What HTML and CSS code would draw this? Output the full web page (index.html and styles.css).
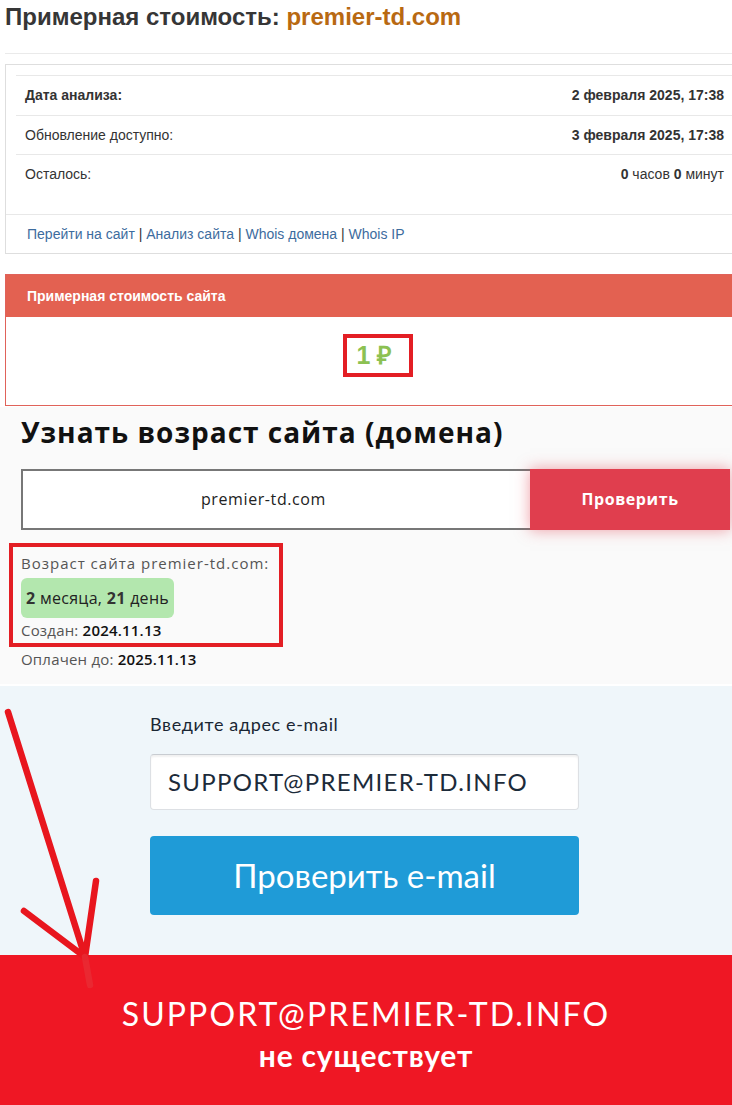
FILE: index.html
```html
<!DOCTYPE html>
<html lang="ru">
    <head>
        <meta charset="UTF-8" />
        <meta
            name="viewport"
            content="width=device-width, initial-scale=1.0" />
        <title>Примерная стоимость: premier-td.com</title>
        <link rel="stylesheet" href="styles.css">
    </head>
    <body>
        <div class="page">
            <section class="cost">
                <h1>Примерная стоимость: <span class="domain">premier-td.com</span></h1>
                <hr />

                <div class="card">
                    <div class="card-body">
                        <table class="info">
                            <tr class="strong">
                                <td>Дата анализа:</td>
                                <td>2 февраля 2025, 17:38</td>
                            </tr>
                            <tr>
                                <td>Обновление доступно:</td>
                                <td><b>3 февраля 2025, 17:38</b></td>
                            </tr>
                            <tr>
                                <td>Осталось:</td>
                                <td><b>0</b> часов <b>0</b> минут</td>
                            </tr>
                        </table>
                    </div>
                    <div class="card-footer">
                        <a href="#">Перейти на сайт</a> |
                        <a href="#">Анализ сайта</a> |
                        <a href="#">Whois домена</a> |
                        <a href="#">Whois IP</a>
                    </div>
                </div>

                <div class="price">
                    <div class="price-head">Примерная стоимость сайта</div>
                    <div class="price-body">
                        <span class="price-value">1 ₽</span>
                    </div>
                </div>
            </section>

            <section class="age">
                <h2>Узнать возраст сайта (домена)</h2>
                <div class="age-form">
                    <div class="age-input">premier-td.com</div>
                    <button class="age-btn">Проверить</button>
                </div>
                <div class="age-result">
                    <p class="age-label">Возраст сайта premier-td.com:</p>
                    <p class="age-badge"><b>2</b> месяца, <b>21</b> день</p>
                    <p class="age-date">Создан: <span>2024.11.13</span></p>
                    <span class="mark"></span>
                </div>
                <p class="age-date paid">Оплачен до: <span>2025.11.13</span></p>
            </section>

            <section class="email">
                <div class="email-form">
                    <label>Введите адрес e-mail</label>
                    <div class="email-input">SUPPORT@PREMIER-TD.INFO</div>
                    <button class="email-btn">Проверить e-mail</button>
                </div>
            </section>

            <section class="result">
                <p class="result-email">SUPPORT@PREMIER-TD.INFO</p>
                <p class="result-text">не существует</p>
            </section>

            <svg class="arrow" width="110" height="1000" viewBox="0 0 110 1000">
                <path d="M8 712 L85 957 M24 911 L85 957 M96 881 L85 957" />
                <path class="arrow-tail" d="M85 957 L90 985" />
            </svg>
        </div>
    </body>
</html>
```

FILE: styles.css
```css
* {
    box-sizing: border-box;
}

body {
    margin: 0;
    background: #fff;
}

.page {
    position: relative;
    overflow: hidden;
}

/* top block: cost and info */
.cost {
    padding-left: 5px;
    margin-right: -12px;
    font-family: "Liberation Sans", Arial, sans-serif;
    color: #333;

    & h1 {
        margin: 0;
        padding-top: 3px;
        font-size: 24px;
        line-height: 28px;
        font-weight: bold;
        color: #363636;

        & .domain {
            color: #b86912;
        }
    }

    & hr {
        margin: 22px 0 10px;
        border: 0;
        border-top: 1px solid #eaeaea;
    }
}

.card {
    border: 1px solid #dedede;
    background: #fff;

    & .card-body {
        padding: 10px 10px 20px 10px;
    }

    & .card-footer {
        border-top: 1px solid #e8e8e8;
        padding: 9px 21px;
        font-size: 14px;
        line-height: 20px;
        color: #333;

        & a {
            color: #3d6c9e;
            text-decoration: none;
        }
    }
}

table.info {
    width: 100%;
    border-collapse: collapse;
    font-size: 14px;

    & td {
        border-top: 1px solid #e8e8e8;
        padding: 10px 9px;
        line-height: 18.5px;
    }

    & td:last-child {
        text-align: right;
    }

    & tr.strong td {
        font-weight: bold;
    }
}

.price {
    margin-top: 20px;
    border: 1px solid #e0625a;
    background: #fff;

    & .price-head {
        height: 42px;
        line-height: 42px;
        padding: 0 21px;
        background: #e36151;
        color: #fff;
        font-size: 14px;
        font-weight: bold;
    }

    & .price-body {
        display: flex;
        justify-content: center;
        padding: 17px 0 28px;
    }

    & .price-value {
        border: 4px solid #e31e24;
        padding: 0 17px 0 10px;
        margin-left: 7px;
        line-height: 35px;
        font-size: 25px;
        font-weight: bold;
        color: #8cc152;
    }
}

/* domain age */
.age {
    margin-top: 1px;
    padding: 7px 2px 14px 21px;
    background: #fafafa;
    font-family: "Open Sans", sans-serif;

    & h2 {
        margin: 0 0 19px;
        font-size: 28px;
        line-height: 36px;
        font-weight: 700;
        letter-spacing: 1px;
        color: #111;
    }

    & p {
        margin: 0;
    }
}

.age-form {
    display: flex;
    height: 61px;

    & .age-input {
        flex: 0 0 509px;
        display: flex;
        align-items: center;
        justify-content: center;
        padding-right: 26px;
        border: 2px solid #777;
        border-right: 0;
        background: #fff;
        font-size: 16px;
        letter-spacing: 0.6px;
        color: #222;
    }

    & .age-btn {
        flex: 1;
        border: 0;
        background: #e03e4e;
        color: #fff;
        font-family: "Open Sans", sans-serif;
        font-size: 16px;
        font-weight: 700;
        letter-spacing: 0.6px;
        box-shadow: 0 0 14px rgba(224, 62, 78, 0.5);
    }
}

.age-result {
    position: relative;
    margin-top: 22px;

    & .age-label {
        font-size: 15px;
        line-height: 22px;
        letter-spacing: 1px;
        color: #555;
    }

    & .age-badge {
        width: fit-content;
        margin-top: 4px;
        height: 40px;
        line-height: 40px;
        padding: 0 5px;
        border-radius: 6px;
        background: #b3e7ae;
        font-size: 16px;
        font-weight: 500;
        letter-spacing: 0.3px;
        color: #222;

        & b {
            font-weight: 700;
            color: #333;
        }
    }

    & .mark {
        position: absolute;
        left: -12px;
        top: -9px;
        width: 274px;
        height: 104px;
        border: 4px solid #e31e24;
    }
}

.age .age-date {
    margin-top: 1px;
    font-size: 15px;
    line-height: 22px;
    letter-spacing: 0.2px;
    color: #555;

    & span {
        color: #111;
        font-weight: 600;
    }

    &.paid {
        margin-top: 7px;
    }
}

/* e-mail check */
.email {
    margin-top: 2px;
    padding: 26px 0 40px 150px;
    background: #eff6fa;
    font-family: Lato, sans-serif;

    & .email-form {
        width: 429px;
    }

    & label {
        display: block;
        font-size: 18px;
        line-height: 24px;
        letter-spacing: 0.65px;
        color: #1a2633;
    }

    & .email-input {
        display: flex;
        align-items: center;
        height: 56px;
        margin-top: 18px;
        padding-left: 17px;
        border: 1px solid #dde0e4;
        border-top-color: #c8ccd1;
        border-radius: 4px;
        background: #fff;
        box-shadow: inset 0 2px 2px rgba(0, 0, 0, 0.06);
        font-size: 24px;
        letter-spacing: 1.3px;
        color: #1c2b3a;
    }

    & .email-btn {
        display: block;
        width: 100%;
        height: 79px;
        margin-top: 26px;
        border: 0;
        border-radius: 4px;
        background: #1f9bd7;
        color: #fff;
        font-family: Lato, sans-serif;
        font-size: 33px;
    }
}

.result {
    padding: 40px 0 33px;
    background: #ef1724;
    color: #fff;
    text-align: center;
    font-family: Lato, sans-serif;

    & p {
        margin: 0;
    }

    & .result-email {
        font-size: 32px;
        line-height: 38px;
        letter-spacing: 2.1px;
    }

    & .result-text {
        margin-top: 5px;
        font-size: 30px;
        line-height: 34px;
        font-weight: 700;
        letter-spacing: 0.8px;
    }
}

.arrow {
    position: absolute;
    left: 0;
    top: 0;
    pointer-events: none;

    & path {
        fill: none;
        stroke: #e8161e;
        stroke-width: 6.5;
        stroke-linecap: round;
        stroke-linejoin: round;
    }

    & .arrow-tail {
        stroke: #e6333a;
        opacity: 0.6;
    }
}
```
